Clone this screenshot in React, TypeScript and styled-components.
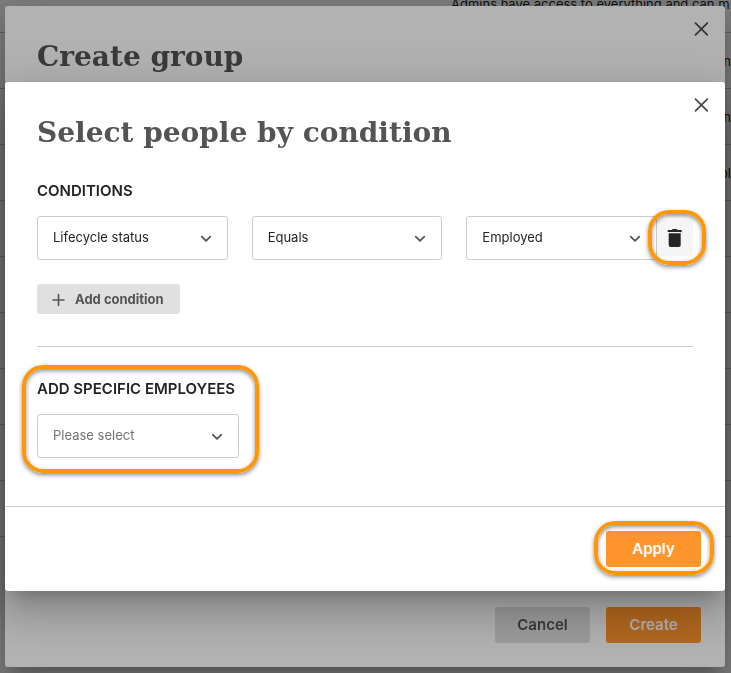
import React from "react";
import styled, { createGlobalStyle, css } from "styled-components";

const GlobalStyle = createGlobalStyle`
  *, *::before, *::after { box-sizing: border-box; }
  html, body { margin: 0; height: 100%; overflow: hidden; background: #ffffff; }
  body { font-family: Inter, "Open Sans", sans-serif; font-size: 13px; color: #242424; }
  button, select { font-family: inherit; }
`;

const RoleList = styled.ul`
  list-style: none;
  margin: 0;
  padding: 0;
`;

const RoleRow = styled.li<{ $first?: boolean }>`
  display: flex;
  justify-content: ${(p) => (p.$first ? "flex-start" : "flex-end")};
  align-items: ${(p) => (p.$first ? "flex-start" : "center")};
  height: ${(p) => (p.$first ? 33 : 56)}px;
  padding-left: ${(p) => (p.$first ? 451 : 0)}px;
  border-bottom: 1px solid #c4c4c4;
  line-height: 20px;
  white-space: nowrap;
`;

const RoleText = styled.span`
  margin-top: -6px;
`;

const Overlay = styled.div`
  position: fixed;
  inset: 0;
  display: flex;
  align-items: center;
  padding: 0 6px 0 5px;
  background: rgba(0, 0, 0, 0.3);
`;

const Dialog = styled.section<{ $fill?: boolean }>`
  flex: 1;
  display: flex;
  flex-direction: column;
  height: ${(p) => (p.$fill ? "calc(100vh - 12px)" : "auto")};
  background: #ffffff;
  border-radius: 3px;
  box-shadow:
    0 11px 15px -7px rgba(0, 0, 0, 0.2),
    0 24px 38px 3px rgba(0, 0, 0, 0.14),
    0 9px 46px 8px rgba(0, 0, 0, 0.12);
`;

const DialogHeader = styled.header`
  display: flex;
  justify-content: space-between;
  align-items: flex-start;
  padding: 0 12px 30px 32px;
`;

const Title = styled.h2`
  margin: 33px 0 0;
  font-family: "DejaVu Serif", serif;
  font-size: 28px;
  line-height: 36px;
  font-weight: 700;
  color: #545454;
  white-space: nowrap;
`;

const CloseButton = styled.button`
  display: grid;
  place-items: center;
  width: 24px;
  height: 24px;
  margin-top: 11px;
  padding: 0;
  border: 0;
  background: none;
  color: #474747;
`;

const DialogBody = styled.div`
  flex: 1;
  padding: 0 32px 48px;
`;

const SectionLabel = styled.h3`
  margin: 0 0 15px;
  font-size: 15px;
  line-height: 20px;
  font-weight: 600;
  color: #242424;
  white-space: nowrap;
`;

const ConditionRow = styled.div`
  display: flex;
  align-items: center;
`;

const ConditionFields = styled.div`
  flex: 1;
  display: grid;
  grid-template-columns: repeat(3, minmax(0, 1fr));
  gap: 24px;
`;

const Field = styled.div`
  display: grid;
  align-items: center;

  > * { grid-area: 1 / 1; }
  > svg { justify-self: end; margin-right: 15px; pointer-events: none; }
`;

const Select = styled.select<{ $placeholder?: boolean }>`
  appearance: none;
  width: 100%;
  height: 44px;
  padding: 0 40px 2px 15px;
  border: 1px solid #cccccc;
  border-radius: 3px;
  background: #ffffff;
  font-size: 13px;
  color: ${(p) => (p.$placeholder ? "#737373" : "#242424")};
`;

const Highlight = styled.div<{ $inset: string }>`
  position: relative;

  &::after {
    content: "";
    position: absolute;
    inset: ${(p) => p.$inset};
    border: 4px solid #ff9606;
    border-radius: 21px;
    box-shadow: 0 2px 4px rgba(0, 0, 0, 0.45), inset 0 2px 4px rgba(0, 0, 0, 0.45);
    pointer-events: none;
  }
`;

const DeleteButton = styled.button`
  display: grid;
  place-items: center;
  width: 36px;
  height: 36px;
  padding: 0;
  border: 0;
  border-radius: 3px;
  background: #f5f5f5;
  color: #242424;
`;

const AddButton = styled.button`
  display: flex;
  align-items: center;
  gap: 10px;
  height: 30px;
  margin-top: 24px;
  padding: 0 16px 0 15px;
  border: 0;
  border-radius: 3px;
  background: #e0e0e0;
  color: #545454;
  font-size: 13px;
  font-weight: 700;
`;

const Divider = styled.hr`
  height: 1px;
  margin: 32px 0;
  border: 0;
  background: #cccccc;
`;

const EmployeePicker = styled.div`
  width: 202px;
`;

const DialogFooter = styled.footer`
  display: flex;
  justify-content: flex-end;
  gap: 16px;
  padding: 24px;
  border-top: 1px solid #cccccc;
`;

const ActionButton = styled.button<{ $primary?: boolean }>`
  min-width: 95px;
  height: 36px;
  padding: 0 16px 2px;
  border: 0;
  border-radius: 3px;
  font-size: 15px;
  font-weight: 600;
  ${(p) =>
    p.$primary
      ? css`background: #ff962d; color: #ffffff;`
      : css`background: #e0e0e0; color: #545454;`}
`;

const CloseIcon = () => (
  <svg width="14" height="14" viewBox="0 0 14 14" fill="none" stroke="currentColor" strokeWidth="1.7" strokeLinecap="round" aria-hidden="true">
    <path d="M1.500 1.200l11.800 11.600M13.300 1.200L1.500 12.800" />
  </svg>
);

const ChevronIcon = () => (
  <svg width="14" height="14" viewBox="0 0 14 14" fill="none" stroke="#545454" strokeWidth="1.7" strokeLinecap="round" strokeLinejoin="round" aria-hidden="true">
    <path d="M2.7 5.6L7 9.9l4.300-4.300" />
  </svg>
);

const PlusIcon = () => (
  <svg width="13" height="14" viewBox="0 0 13 14" fill="none" stroke="currentColor" strokeWidth="1.6" strokeLinecap="round" aria-hidden="true">
    <path d="M6.500 2.500v11M1 8h11" />
  </svg>
);

const TrashIcon = () => (
  <svg width="16" height="20" viewBox="0 0 16 20" fill="currentColor" aria-hidden="true">
    <path d="M.7 2h4.200L5.700 1h4l.8 1h4.200v2H.7z" />
    <path d="M1.700 5.200h12V17a2 2 0 0 1-2 2h-8a2 2 0 0 1-2-2z" />
  </svg>
);

type PickerProps = { label: string; options: string[]; placeholder?: boolean };

const Picker = ({ label, options, placeholder }: PickerProps) => (
  <Field>
    <Select aria-label={label} $placeholder={placeholder}>
      {options.map((o) => (
        <option key={o}>{o}</option>
      ))}
    </Select>
    <ChevronIcon />
  </Field>
);

const Header = ({ id, title }: { id: string; title: string }) => (
  <DialogHeader>
    <Title id={id}>{title}</Title>
    <CloseButton type="button" aria-label="Close">
      <CloseIcon />
    </CloseButton>
  </DialogHeader>
);

const roleRows = ["n", "n", "ol", "", "", "", "", "", ""];

export default function App() {
  return (
    <>
      <GlobalStyle />
      <RoleList>
        <RoleRow $first>
          <RoleText>Admins have access to everything and can m</RoleText>
        </RoleRow>
        {roleRows.map((text, i) => (
          <RoleRow key={i}>{text}</RoleRow>
        ))}
      </RoleList>

      <Overlay>
        <Dialog $fill role="dialog" aria-labelledby="group-title">
          <Header id="group-title" title="Create group" />
          <DialogBody />
          <DialogFooter>
            <ActionButton type="button">Cancel</ActionButton>
            <ActionButton type="button" $primary>Create</ActionButton>
          </DialogFooter>
        </Dialog>
      </Overlay>

      <Overlay>
        <Dialog role="dialog" aria-modal="true" aria-labelledby="people-title">
          <Header id="people-title" title="Select people by condition" />
          <DialogBody>
            <SectionLabel>CONDITIONS</SectionLabel>
            <ConditionRow>
              <ConditionFields>
                <Picker label="Attribute" options={["Lifecycle status"]} />
                <Picker label="Operator" options={["Equals"]} />
                <Picker label="Value" options={["Employed"]} />
              </ConditionFields>
              <Highlight $inset="-10px -13px -9px -9px">
                <DeleteButton type="button" aria-label="Delete condition">
                  <TrashIcon />
                </DeleteButton>
              </Highlight>
            </ConditionRow>
            <AddButton type="button">
              <PlusIcon />
              Add condition
            </AddButton>
            <Divider />
            <EmployeePicker>
              <Highlight $inset="-14px -20px -15px -15px">
                <SectionLabel>ADD SPECIFIC EMPLOYEES</SectionLabel>
                <Picker label="Add specific employees" options={["Please select"]} placeholder />
              </Highlight>
            </EmployeePicker>
          </DialogBody>
          <DialogFooter>
            <Highlight $inset="-10px -13px -8px -12px">
              <ActionButton type="button" $primary>Apply</ActionButton>
            </Highlight>
          </DialogFooter>
        </Dialog>
      </Overlay>
    </>
  );
}
